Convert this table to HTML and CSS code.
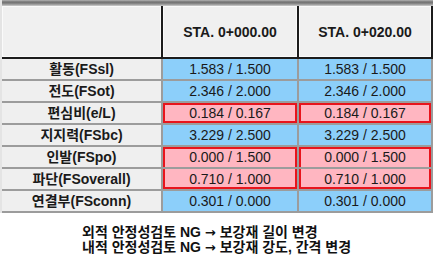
FILE: index.html
```html
<!DOCTYPE html>
<html lang="ko">
<head>
<meta charset="utf-8">
<link rel="stylesheet" href="styles.css">
</head>
<body>
<div class="sheet">
  <div class="band"></div>
  <div class="head">
    <div class="hcell"></div>
    <div class="hcell">STA. 0+000.00</div>
    <div class="hcell">STA. 0+020.00</div>
  </div>
  <div class="body">
    <div class="label">활동(FSsl)</div>
    <div class="val ok">1.583 / 1.500</div>
    <div class="val ok">1.583 / 1.500</div>

    <div class="label">전도(FSot)</div>
    <div class="val ok">2.346 / 2.000</div>
    <div class="val ok">2.346 / 2.000</div>

    <div class="label">편심비(e/L)</div>
    <div class="val ng ng-box">0.184 / 0.167</div>
    <div class="val ng ng-box">0.184 / 0.167</div>

    <div class="label">지지력(FSbc)</div>
    <div class="val ok">3.229 / 2.500</div>
    <div class="val ok">3.229 / 2.500</div>

    <div class="label">인발(FSpo)</div>
    <div class="val ng ng-top">0.000 / 1.500</div>
    <div class="val ng ng-top">0.000 / 1.500</div>

    <div class="label">파단(FSoverall)</div>
    <div class="val ng ng-bot">0.710 / 1.000</div>
    <div class="val ng ng-bot">0.710 / 1.000</div>

    <div class="label">연결부(FSconn)</div>
    <div class="val ok">0.301 / 0.000</div>
    <div class="val ok">0.301 / 0.000</div>
  </div>
</div>
<div class="notes">
  <p>외적 안정성검토 NG <span class="arrow">→</span> 보강재 길이 변경</p>
  <p>내적 안정성검토 NG <span class="arrow">→</span> 보강재 강도, 간격 변경</p>
</div>
</body>
</html>
```
FILE: styles.css
```css
* { box-sizing: border-box; }
html, body { margin: 0; padding: 0; background: #ffffff; }
body {
  width: 433px;
  height: 257px;
  overflow: hidden;
  font-family: "Liberation Sans", "Noto Sans CJK KR", sans-serif;
  color: #1a1a1a;
}
.sheet {
  width: 433px;
  border-left: 2px solid #e4e4e4;
}
.band {
  height: 6px;
  background: linear-gradient(to bottom, #b4b4b4 0, #707070 35%, #8c8c8c 65%, #cfcfcf 100%);
}
.head, .body {
  display: grid;
  grid-template-columns: 159px 134px 132px;
  column-gap: 2px;
  row-gap: 2px;
  padding-right: 2px;
}
.head {
  background: #1c1c1c;
  padding-bottom: 2px;
}
.body {
  background: #9c9c9c;
  padding-bottom: 2px;
}
.hcell {
  height: 51px;
  background: #f0f0f0;
  border: 1px solid #fafafa;
  display: flex;
  align-items: center;
  justify-content: center;
  font-weight: bold;
  font-size: 14px;
  color: #1a1a1a;
}
.label, .val {
  height: 20px;
  display: flex;
  align-items: center;
  justify-content: center;
  line-height: 1;
}
.label {
  background: #efefef;
  font-weight: bold;
  font-size: 14px;
}
.val {
  font-size: 14px;
}
.ok { background: #8ccffa; }
.ng { background: #ffb6c1; }
.ng-box { box-shadow: inset 0 0 0 2px #e8141c; }
.ng-top { box-shadow: inset 0 2px 0 #e8141c, inset 2px 0 0 #e8141c, inset -2px 0 0 #e8141c; }
.ng-bot { box-shadow: inset 0 -2px 0 #e8141c, inset 2px 0 0 #e8141c, inset -2px 0 0 #e8141c; }
.notes {
  padding: 12px 0 0 82px;
  font-weight: bold;
  font-size: 14px;
  color: #111;
}
.notes p {
  margin: 0;
  line-height: 15px;
  white-space: nowrap;
}
.arrow {
  font-family: "DejaVu Sans", sans-serif;
  font-size: 13px;
}
```
